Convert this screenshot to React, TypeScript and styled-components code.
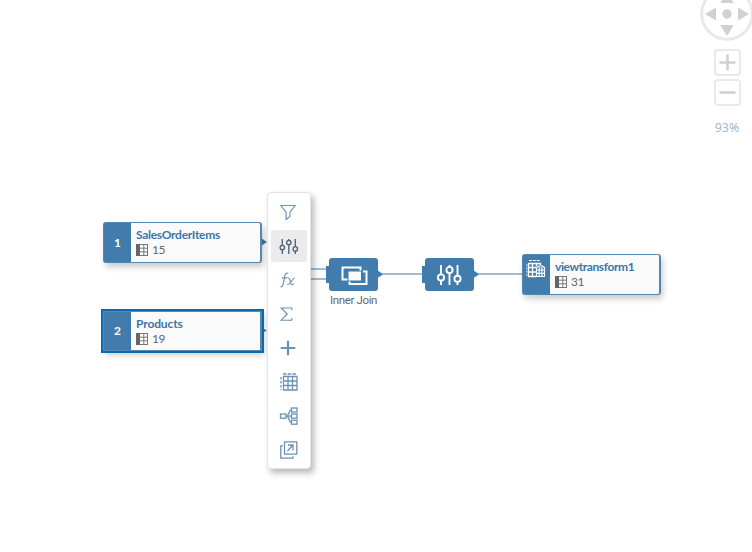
import React from "react";
import styled, { createGlobalStyle } from "styled-components";

const blue = "#427cac";
const line = "#7fa8ca";

const GlobalStyle = createGlobalStyle`
  body { margin: 0; background: #fff; overflow: hidden; }
  * { box-sizing: border-box; }
  svg { display: block; }
`;

const Canvas = styled.main`
  position: relative;
  width: 752px;
  height: 552px;
  overflow: hidden;
  background: #fff;
  font-family: Lato, "Open Sans", sans-serif;
`;

const Wires = styled.svg`
  position: absolute;
  inset: 0;
`;

const TableNode = styled.div<{ $x: number; $y: number; $w: number; $selected?: boolean }>`
  position: absolute;
  left: ${(p) => p.$x}px;
  top: ${(p) => p.$y}px;
  width: ${(p) => p.$w}px;
  height: ${(p) => (p.$selected ? 40 : 41)}px;
  display: flex;
  border: 1px solid #5388b5;
  border-right-width: 2px;
  border-radius: ${(p) => (p.$selected ? 0 : 3)}px;
  background: #fafafa;
  outline: ${(p) => (p.$selected ? "2px solid #0a6cae" : "none")};
  box-shadow: 2px 4px 6px rgba(0, 0, 0, 0.2);
`;

const NodeBadge = styled.div<{ $top?: boolean }>`
  width: 27px;
  flex: none;
  display: flex;
  align-items: ${(p) => (p.$top ? "flex-start" : "center")};
  padding: ${(p) => (p.$top ? "4px 2px 0 0" : "0 0 1px")};
  justify-content: center;
  background: ${blue};
  color: #fff;
  font-size: 12px;
  font-weight: 700;
`;

const NodeBody = styled.div`
  padding: 4px 0 0 5px;
`;

const NodeTitle = styled.div<{ $spacing?: number }>`
  height: 15px;
  line-height: 16px;
  font-size: 12px;
  font-weight: 700;
  letter-spacing: ${(p) => p.$spacing ?? 0}px;
  color: #3c76a5;
  white-space: nowrap;
`;

const ColumnCount = styled.div`
  display: flex;
  align-items: center;
  gap: 4px;
  height: 15px;
  font-size: 12px;
  line-height: 15px;
  letter-spacing: -0.4px;
  color: #666;
`;

const OperatorNode = styled.div<{ $x: number }>`
  position: absolute;
  left: ${(p) => p.$x}px;
  top: 258px;
  width: 49px;
  height: 33px;
  display: flex;
  align-items: center;
  justify-content: center;
  border-radius: 3px;
  background: ${blue};
`;

const OperatorLabel = styled.div`
  position: absolute;
  left: 314px;
  top: 293px;
  width: 79px;
  text-align: center;
  font: 11.5px/15px Roboto, "Liberation Sans", sans-serif;
  letter-spacing: -0.35px;
  color: #666;
`;

const Toolbar = styled.div`
  position: absolute;
  left: 267px;
  top: 192px;
  width: 44px;
  height: 277px;
  display: flex;
  flex-direction: column;
  align-items: center;
  gap: 2px;
  padding-top: 3px;
  border: 1px solid #e5e5e5;
  border-radius: 4px;
  background: #fff;
  box-shadow: 3px 4px 6px rgba(0, 0, 0, 0.28);
`;

const ToolButton = styled.button<{ $active?: boolean }>`
  width: 36px;
  height: 32px;
  flex: none;
  display: flex;
  align-items: center;
  justify-content: center;
  padding: 0 0 1px;
  border: 0;
  border-radius: 2px;
  background: ${(p) => (p.$active ? "#ebebeb" : "transparent")};
  color: ${(p) => (p.$active ? "#4b607a" : "#6b91b4")};
`;

const Navigator = styled.div`
  position: absolute;
  left: 700px;
  top: -13px;
  width: 54px;
  display: flex;
  flex-direction: column;
  align-items: center;
`;

const PanDial = styled.svg`
  margin-bottom: 8px;
`;

const ZoomButton = styled.button`
  width: 27px;
  height: 27px;
  margin-bottom: 3px;
  padding: 0;
  display: flex;
  align-items: center;
  justify-content: center;
  border: 2px solid #e9e9e9;
  border-radius: 4px;
  background: #fff;
`;

const ZoomLevel = styled.div`
  margin-top: 10px;
  font: 12.5px/18px "Noto Sans", sans-serif;
  color: #a5b8cc;
`;

const Icon = ({ children, sw = 1.15 }: { children: React.ReactNode; sw?: number }) => (
  <svg width="22" height="22" viewBox="0 0 22 22" fill="none" stroke="currentColor" strokeWidth={sw}>
    {children}
  </svg>
);

const Columns = () => (
  <svg width="12" height="12" viewBox="0 0 12 12">
    <rect x=".5" y=".5" width="11" height="11" fill="#fff" stroke="#777" />
    <path d="M0 0h4v12H0z" fill="#666" />
    <path d="M4 4.2h8M4 7.8h8M7.8 0v12" stroke="#777" fill="none" />
  </svg>
);

const TransformIcon = () => (
  <svg width="20" height="20" viewBox="0 0 20 20" fill="none" stroke="#fff">
    <path d="M3 1.5h11" strokeDasharray="3 .8" />
    <path d="M2.5 4.5h12v2M2.5 4v13.5h8M2.5 8.5h8M2.5 13h8M6.5 4v13.5M10.5 4v3" strokeWidth="1.4" />
    <path d="M10.5 17.5v-9l2-1.5h4l2 1.5v9zM10.5 11h8M10.5 14.3h8M13.2 8v9.5M15.9 8v9.5" strokeWidth="1.2" />
    <path d="M.7 5v12.5" strokeDasharray="2 1.3" strokeWidth=".7" />
  </svg>
);

const JoinIcon = () => (
  <svg width="28" height="22" viewBox="0 0 28 22" fill="none" stroke="#fff" strokeWidth="2">
    <path d="M2.5 3.5h18v12h-18z" />
    <path d="M7.5 6.5h20v14.5h-20z" fill={blue} stroke="none" />
    <path d="M8.5 7.5h12.5v9H8.5z" fill="#fafafa" stroke="none" />
    <path d="M23 7.5h3.5v12.5H9.5v-2.5" />
  </svg>
);

const SlidersIcon = () => (
  <svg width="25" height="22" viewBox="0 0 25 22" fill="none" stroke="#fff" strokeWidth="1.9">
    <path d="M4 1v9M4 17v4M12.5 1v2M12.5 9.5V21M20.5 1v10.5M20.5 18v3" />
    <circle cx="4" cy="13.5" r="3.1" />
    <circle cx="12.5" cy="6" r="3.1" />
    <circle cx="20.5" cy="14.8" r="3.1" />
  </svg>
);

const tools = [
  {
    name: "Filter",
    icon: <Icon><path d="M2.8 4.5h14.4l-5.3 6.7v4.3l-3.8 3v-7.3z" /></Icon>,
  },
  {
    name: "Projection",
    active: true,
    icon: (
      <Icon sw={1.3}>
        <path d="M4.3 4v6M4.3 15v4M10.8 4v1.5M10.8 10v9M17.3 4v7.5M17.3 16.3v2.7" />
        <circle cx="4.3" cy="12.5" r="2.2" />
        <circle cx="10.8" cy="7.5" r="2.2" />
        <circle cx="17.3" cy="13.9" r="2.2" />
      </Icon>
    ),
  },
  {
    name: "Calculated columns",
    icon: (
      <Icon>
        <path d="M10.3 4.4c-2-.8-3 .1-3.4 2.1L5 15.8c-.3 1.5-1.1 2.2-2.5 2M4 8.8h5.3M9.8 9c3.1-.6 2.4 6.4 3.8 6.7.8.2 1.7-.4 2.2-1M16.8 9c-2.2-.5-4.3 7-7.7 6.5" />
      </Icon>
    ),
  },
  {
    name: "Aggregation",
    icon: <Icon><path d="M13.8 7.3V5H3.2l6 6-6 6.2h10.6v-2.3" /></Icon>,
  },
  {
    name: "Add",
    icon: <Icon sw={2.2}><path d="M10 3.7v14.6M2.7 11h14.6" /></Icon>,
  },
  {
    name: "Preview",
    icon: (
      <Icon sw={1.3}>
        <path d="M5 3h14" strokeDasharray="3.5 1.2" />
        <path d="M5.5 5.5h13.5v13.5H5.5zM5.5 10h13.5M5.5 14.5h13.5M10 5.5v13.5M14.5 5.5v13.5" />
        <path d="M3 6v13" strokeDasharray="2.5 1.5" />
      </Icon>
    ),
  },
  {
    name: "Lineage",
    icon: (
      <Icon sw={1.3}>
        <rect x="2.5" y="9" width="5.5" height="4.2" />
        <rect x="13.5" y="3" width="5.5" height="4" />
        <rect x="13.5" y="9" width="5.5" height="4.2" />
        <rect x="13.5" y="15.2" width="5.5" height="4" />
        <path d="M8 11.1h5.5M8 11.1h1.5l2.7-6h1.3M9.5 11.1l2.7 6h1.3" />
      </Icon>
    ),
  },
  {
    name: "Open",
    icon: (
      <Icon sw={1.3}>
        <path d="M6.5 2.8h12.3v12.4H6.5zM5 6.8H2.8v12.4H15v-2" />
        <path d="M9.5 12l5.5-6M10 6h5v5.5" />
      </Icon>
    ),
  },
];

const Table = ({ x, y, w, badge, title, count, selected, spacing, topBadge }: {
  x: number; y: number; w: number; badge: React.ReactNode;
  title: string; count: number; selected?: boolean; spacing?: number; topBadge?: boolean;
}) => (
  <TableNode $x={x} $y={y} $w={w} $selected={selected}>
    <NodeBadge $top={topBadge}>{badge}</NodeBadge>
    <NodeBody>
      <NodeTitle $spacing={spacing}>{title}</NodeTitle>
      <ColumnCount><Columns />{count}</ColumnCount>
    </NodeBody>
  </TableNode>
);

export default function App() {
  return (
    <Canvas>
      <GlobalStyle />
      <Wires width="752" height="552" fill="none" stroke={line} strokeWidth="1.6">
        <path d="M308 269h19M308 279h19M380 274h43M476 274h46" />
        <path d="M326 266h4v17h-4zM422 266h4v17h-4zM377 270l6 4.3-6 4.2zM473 270l6 4.3-6 4.2zM261 238l6 4-6 4zM263 328.5l4 2-4 2z" fill={blue} stroke="none" />
      </Wires>
      <Table x={103} y={222} w={159} badge="1" title="SalesOrderItems" count={15} spacing={-0.28} />
      <Table x={103} y={311} w={159} badge="2" title="Products" count={19} selected spacing={-0.12} />
      <Table x={522} y={254} w={139} badge={<TransformIcon />} topBadge title="viewtransform1" count={31} spacing={-0.4} />
      <OperatorNode $x={329}><JoinIcon /></OperatorNode>
      <OperatorLabel>Inner Join</OperatorLabel>
      <OperatorNode $x={425}><SlidersIcon /></OperatorNode>
      <Toolbar>
        {tools.map((tool) => (
          <ToolButton key={tool.name} $active={tool.active} aria-label={tool.name}>{tool.icon}</ToolButton>
        ))}
      </Toolbar>
      <Navigator>
        <PanDial width="54" height="54" viewBox="0 0 54 54">
          <circle cx="27" cy="27" r="25.3" fill="#fff" stroke="#e9e9e9" strokeWidth="3" />
          <circle cx="27" cy="27" r="4.7" fill="#d1d1d1" />
          <path d="M5 27l11-6.5v13zM49 27l-11-6.5v13zM27 49l-6.7-11h13.4zM27 5l-6.7 11h13.4z" fill="#d1d1d1" />
        </PanDial>
        <ZoomButton aria-label="Zoom in">
          <svg width="17" height="17"><path d="M8.5 0.5v16M.5 8.5h16" stroke="#cfcfcf" strokeWidth="2.5" /></svg>
        </ZoomButton>
        <ZoomButton aria-label="Zoom out">
          <svg width="17" height="17"><path d="M.5 8.5h16" stroke="#cfcfcf" strokeWidth="2.5" /></svg>
        </ZoomButton>
        <ZoomLevel>93%</ZoomLevel>
      </Navigator>
    </Canvas>
  );
}
